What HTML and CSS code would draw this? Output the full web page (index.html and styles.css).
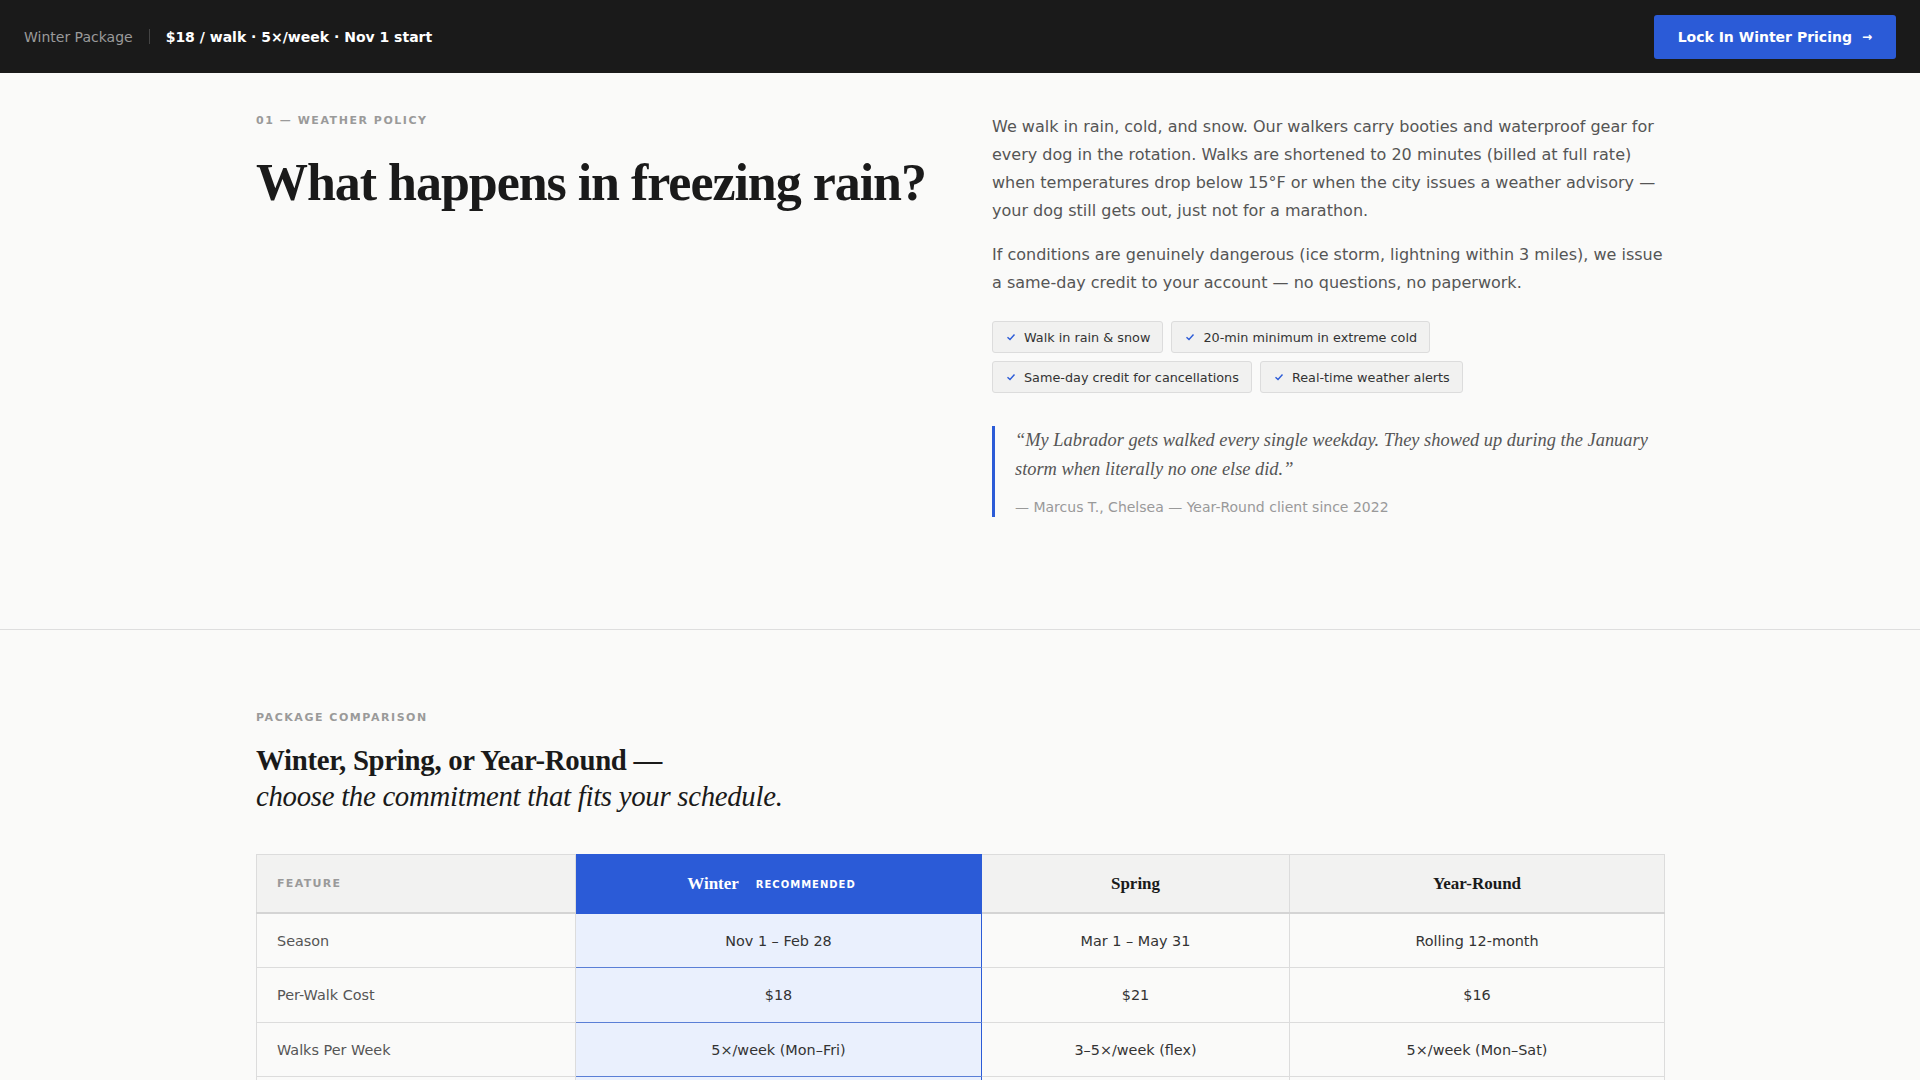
FILE: index.html
```html
<!DOCTYPE html>
<html lang="en">
<head>
<meta charset="utf-8">
<title>Winter Package</title>
<link rel="stylesheet" href="styles.css">
</head>
<body>
<header class="topbar">
  <div class="topbar-info">
    <span class="topbar-name">Winter Package</span>
    <span class="topbar-sep"></span>
    <span class="topbar-meta">$18 / walk · 5×/week · Nov 1 start</span>
  </div>
  <a class="cta" href="#">Lock In Winter Pricing <span class="cta-arrow">→</span></a>
</header>

<section class="policy">
  <div class="container policy-grid">
    <div class="policy-left">
      <div class="eyebrow">01 — Weather Policy</div>
      <h1 class="policy-title">What happens in freezing rain?</h1>
    </div>
    <div class="policy-right">
      <p class="body-text">We walk in rain, cold, and snow. Our walkers carry booties and waterproof gear for every dog in the rotation. Walks are shortened to 20 minutes (billed at full rate) when temperatures drop below 15°F or when the city issues a weather advisory — your dog still gets out, just not for a marathon.</p>
      <p class="body-text">If conditions are genuinely dangerous (ice storm, lightning within 3 miles), we issue a same-day credit to your account — no questions, no paperwork.</p>
      <ul class="chips">
        <li class="chip"><svg class="chip-check" viewBox="0 0 10 10"><path d="M1.5 5.2 L4 7.5 L8.5 2.5"/></svg>Walk in rain &amp; snow</li>
        <li class="chip"><svg class="chip-check" viewBox="0 0 10 10"><path d="M1.5 5.2 L4 7.5 L8.5 2.5"/></svg>20-min minimum in extreme cold</li>
        <li class="chip"><svg class="chip-check" viewBox="0 0 10 10"><path d="M1.5 5.2 L4 7.5 L8.5 2.5"/></svg>Same-day credit for cancellations</li>
        <li class="chip"><svg class="chip-check" viewBox="0 0 10 10"><path d="M1.5 5.2 L4 7.5 L8.5 2.5"/></svg>Real-time weather alerts</li>
      </ul>
      <blockquote class="quote">
        <p class="quote-text">“My Labrador gets walked every single weekday. They showed up during the January storm when literally no one else did.”</p>
        <div class="quote-by">— Marcus T., Chelsea — Year-Round client since 2022</div>
      </blockquote>
    </div>
  </div>
</section>

<section class="compare">
  <div class="container">
    <div class="eyebrow">Package Comparison</div>
    <h2 class="compare-title">Winter, Spring, or Year-Round —<br><em>choose the commitment that fits your schedule.</em></h2>
    <table class="ctable">
      <colgroup>
        <col class="col-feature">
        <col class="col-winter">
        <col class="col-spring">
        <col class="col-year">
      </colgroup>
      <thead>
        <tr>
          <th class="th-feature">Feature</th>
          <th class="th-plan th-winter">Winter <span class="badge">Recommended</span></th>
          <th class="th-plan">Spring</th>
          <th class="th-plan">Year-Round</th>
        </tr>
      </thead>
      <tbody>
        <tr><td class="td-feature">Season</td><td class="td-winter">Nov 1 – Feb 28</td><td>Mar 1 – May 31</td><td>Rolling 12-month</td></tr>
        <tr><td class="td-feature">Per-Walk Cost</td><td class="td-winter">$18</td><td>$21</td><td>$16</td></tr>
        <tr><td class="td-feature">Walks Per Week</td><td class="td-winter">5×/week (Mon–Fri)</td><td>3–5×/week (flex)</td><td>5×/week (Mon–Sat)</td></tr>
        <tr><td class="td-feature">Weather Credits</td><td class="td-winter">Included</td><td>Included</td><td>Included</td></tr>
        <tr><td class="td-feature">Cancellation Notice</td><td class="td-winter">24 hours</td><td>48 hours</td><td>24 hours</td></tr>
      </tbody>
    </table>
  </div>
</section>
</body>
</html>
```
FILE: styles.css
```css
* { box-sizing: border-box; }
html, body { margin: 0; padding: 0; }
body {
  background: #fafaf9;
  color: #1a1a1a;
  font-family: "DejaVu Sans", "Liberation Sans", sans-serif;
}

.topbar {
  height: 73px;
  background: #1a1a1a;
  display: flex;
  align-items: center;
  justify-content: space-between;
  padding: 0 24px;
}
.topbar-info { display: flex; align-items: center; font-size: 14px; }
.topbar-name { color: #9a9a9a; }
.topbar-sep { width: 1px; height: 15px; background: #444; margin: 0 16px; }
.topbar-meta { color: #fff; font-weight: 700; }
.cta {
  display: flex;
  align-items: center;
  gap: 10px;
  height: 44px;
  padding: 0 24px;
  background: #2b5bd7;
  color: #fff;
  font-size: 14px;
  font-weight: 700;
  text-decoration: none;
  border-radius: 3px;
}
.cta-arrow { font-size: 12px; }

.container { width: 1408px; margin: 0 auto; }

.policy { padding: 40px 0 112px; border-bottom: 1px solid #dedede; }
.policy-grid { display: grid; grid-template-columns: 1fr 1fr; column-gap: 64px; }

.eyebrow {
  font-size: 11px;
  font-weight: 700;
  letter-spacing: 0.14em;
  text-transform: uppercase;
  color: #9a9a9a;
  line-height: 16px;
}
.policy-title {
  margin: 24px 0 0;
  font-family: "Liberation Serif", "Times New Roman", serif;
  font-weight: 700;
  font-size: 52px;
  line-height: 1.15;
  letter-spacing: -0.02em;
  color: #1a1a1a;
}

.body-text {
  margin: 0 0 16px;
  font-size: 16px;
  line-height: 28px;
  color: #555;
}
.chips {
  list-style: none;
  margin: 24px 0 0;
  padding: 0;
  display: flex;
  flex-wrap: wrap;
  gap: 8px;
  max-width: 500px;
}
.chip {
  display: flex;
  align-items: center;
  gap: 8px;
  height: 32px;
  padding: 0 12px 0 13px;
  font-size: 12.8px;
  color: #333;
  background: #f1f1f0;
  border: 1px solid #dcdcdc;
  border-radius: 3px;
}
.chip-check { width: 10px; height: 10px; fill: none; stroke: #2b5bd7; stroke-width: 1.4; }

.quote {
  margin: 33px 0 0;
  padding: 0 0 0 20px;
  border-left: 3px solid #2b5bd7;
}
.quote-text {
  margin: 0;
  font-family: "Liberation Serif", "Times New Roman", serif;
  font-style: italic;
  font-size: 18.4px;
  line-height: 29.4px;
  color: #555;
}
.quote-by {
  margin-top: 12px;
  font-size: 14px;
  line-height: 20px;
  color: #999;
}

.compare { padding: 80px 0 80px; }
.compare-title {
  margin: 16px 0 40px;
  font-family: "Liberation Serif", "Times New Roman", serif;
  font-weight: 700;
  font-size: 28.8px;
  line-height: 36px;
  letter-spacing: -0.01em;
  color: #1a1a1a;
}
.compare-title em { font-weight: 400; font-style: italic; letter-spacing: -0.01em; }

.ctable {
  width: 100%;
  border-collapse: collapse;
  table-layout: fixed;
  border: 1px solid #dcdcdc;
  font-size: 14.4px;
}
.col-feature { width: 319px; }
.col-winter { width: 406px; }
.col-spring { width: 308px; }
.col-year { width: 375px; }
.ctable th {
  height: 59px;
  padding: 0;
  background: #f2f2f1;
  border: 1px solid #dcdcdc;
  border-bottom: 2px solid #d4d4d4;
}
.th-feature {
  text-align: left;
  padding-left: 20px !important;
  font-size: 11px;
  font-weight: 700;
  letter-spacing: 0.12em;
  text-transform: uppercase;
  color: #9a9a9a;
}
.th-plan {
  font-family: "Liberation Serif", "Times New Roman", serif;
  font-size: 17px;
  font-weight: 700;
  color: #1a1a1a;
}
.ctable th.th-winter { background: #2b5bd7; color: #fff; border-color: #2b5bd7; border-bottom-color: #2b5bd7; }
.badge {
  margin-left: 7px;
  padding: 0 14px 0 6px;
  font-family: "DejaVu Sans", sans-serif;
  font-size: 10px;
  font-weight: 700;
  letter-spacing: 0.1em;
  text-transform: uppercase;
  vertical-align: 1px;
}
.ctable td {
  height: 54.5px;
  padding: 0;
  border: 1px solid #dcdcdc;
  text-align: center;
  color: #333;
}
.ctable td.td-feature { text-align: left; padding-left: 20px; color: #555; }
.ctable td.td-winter {
  background: #eaf0fd;
  border-left: 1px solid #2b5bd7;
  border-right: 1px solid #2b5bd7;
  border-bottom: 1px solid #5a7fd6;
}
```
